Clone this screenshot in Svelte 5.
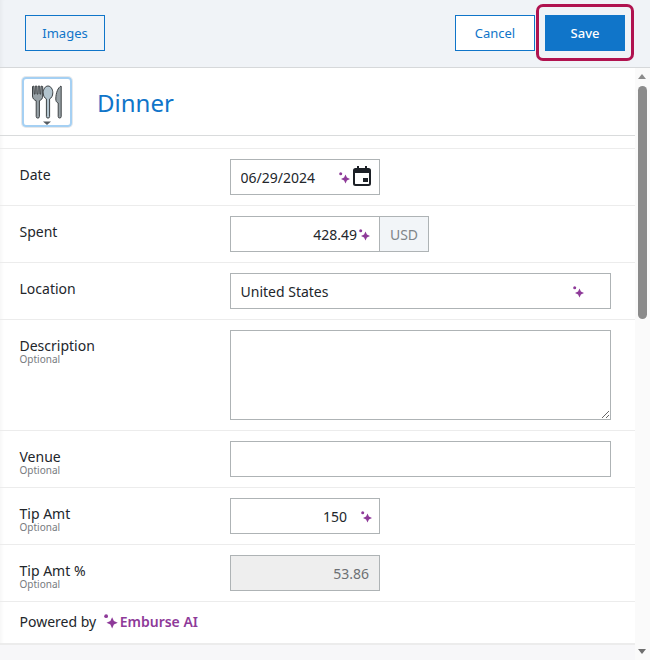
<script>
  const star = 'M6.500 2.500 L7.900 5.600 L11 7 L7.900 8.400 L6.500 11.500 L5.100 8.400 L2 7 L5.100 5.600 Z';
</script>

{#snippet spark(cls)}
  <svg class={cls} viewBox="0 0 12 12" aria-hidden="true">
    <circle cx="1.700" cy="1.700" r="1.500" fill="#8e3a99" />
    <path d={star} fill="#8e3a99" />
  </svg>
{/snippet}

<div class="page">
  <header class="toolbar">
    <button class="btn outline images">Images</button>
    <div class="actions">
      <button class="btn outline cancel">Cancel</button>
      <div class="highlight"><button class="btn primary">Save</button></div>
    </div>
  </header>

  <div class="body">
    <main class="content">
      <div class="title-row">
        <div class="icon-box">
          <svg viewBox="0 0 46 46" width="46" height="46" aria-hidden="true">
            <g stroke="#3d4245" stroke-width="1" stroke-linejoin="round">
              <path d="M8.500 7.500V17c0 2.600 1.700 4 3.700 4.700V37.500a1.600 1.600 0 0 0 3.200 0V21.700c2-.7 3.300-2.100 3.300-4.700V7.500l-1.600-.4-.4 8h-.7l-.3-8h-1.500l-.3 8h-.8l-.3-8h-1.500l-.3 8h-.7l-.4-8Z" fill="#98a2a7"/>
              <path d="M24 7c-2.800 0-4.800 3.200-4.800 6.800 0 3.200 1.500 5.400 3.200 6.100V37.500a1.600 1.600 0 0 0 3.200 0V19.900c1.700-.7 3.200-2.900 3.200-6.100C28.800 10.200 26.800 7 24 7Z" fill="#b3c5cf"/>
              <path d="M37 7c-2.800 1.400-5.200 6.500-5.200 13 0 2.400.9 3.400 2.400 4v13.500a1.500 1.500 0 0 0 3 0V7.300Z" fill="#98a2a7"/>
            </g>
            <path d="M19 42.600h8l-4 3.400Z" fill="#555b60" />
          </svg>
        </div>
        <h1>Dinner</h1>
      </div>
      <div class="spacer"></div>

      <div class="row">
        <label for="date">Date</label>
        <div class="field date-field">
          <input id="date" value="06/29/2024" />
          {@render spark('s-date')}
          <svg class="cal" viewBox="0 0 18 20" width="18" height="20" aria-hidden="true">
            <path fill-rule="evenodd" fill="#1c2026" d="M4 0h2v2h6V0h2v2h1.500A2.500 2.500 0 0 1 18 4.500v13a2.500 2.500 0 0 1-2.500 2.500h-13A2.500 2.500 0 0 1 0 17.500v-13A2.500 2.500 0 0 1 2.500 2H4ZM2 7v10.500c0 .3.200.5.500.5h13c.3 0 .5-.2.500-.5V7ZM10 12h5v4h-5Z"/>
          </svg>
        </div>
      </div>

      <div class="row">
        <label for="spent">Spent</label>
        <div class="spent-wrap">
          <div class="field spent-field">
            <input id="spent" class="right" value="428.49" />
            {@render spark('s-spent')}
          </div>
          <span class="unit">USD</span>
        </div>
      </div>

      <div class="row">
        <label for="loc">Location</label>
        <div class="field wide">
          <input id="loc" value="United States" />
          {@render spark('s-loc')}
        </div>
      </div>

      <div class="row tall">
        <label for="desc">Description<small>Optional</small></label>
        <textarea id="desc"></textarea>
      </div>

      <div class="row">
        <label for="venue">Venue<small>Optional</small></label>
        <div class="field wide"><input id="venue" /></div>
      </div>

      <div class="row">
        <label for="tip">Tip Amt<small>Optional</small></label>
        <div class="field tip-field">
          <input id="tip" class="right" value="150" />
          {@render spark('s-tip')}
        </div>
      </div>

      <div class="row">
        <label for="pct">Tip Amt %<small>Optional</small></label>
        <div class="field tip-field disabled">
          <input id="pct" class="right" value="53.86" disabled />
        </div>
      </div>

      <div class="powered">
        <span>Powered by</span>
        <span class="brand">{@render spark('s-brand')}Emburse AI</span>
      </div>
      <div class="foot"></div>
    </main>

    <div class="scrollbar">
      <span class="arrow up"></span>
      <span class="thumb"></span>
      <span class="arrow down"></span>
    </div>
  </div>
</div>

<style>
  :global(body) {
    margin: 0;
    background: #fff;
  }
  .page {
    width: 650px;
    height: 660px;
    overflow: hidden;
    font-family: "Noto Sans", sans-serif;
    font-size: 14px;
    color: #22262b;
    display: flex;
    flex-direction: column;
  }
  .toolbar {
    height: 67px;
    flex: none;
    background: #f0f3f7;
    border-bottom: 1px solid #d6d8da;
    display: flex;
    justify-content: space-between;
    padding: 0 25px;
    align-items: flex-start;
    box-shadow: inset 4px 0 4px -3px rgba(0, 0, 0, 0.05);
  }
  .btn {
    font: 400 13px/1 "Noto Sans", sans-serif;
    height: 36px;
    width: 80px;
    box-sizing: border-box;
    border-radius: 0;
    cursor: pointer;
    padding: 0;
  }
  .outline {
    border: 1px solid #1075c9;
    color: #1075c9;
    background: transparent;
  }
  .images {
    margin-top: 15px;
  }
  .cancel {
    background: #fff;
    margin-top: 15px;
  }
  .primary {
    display: block;
    border: none;
    background: #1075c9;
    color: #fff;
    font-weight: 500;
  }
  .actions {
    display: flex;
    align-items: flex-start;
  }
  .highlight {
    margin: 4px -9px 0 1px;
    width: 98px;
    height: 57px;
    box-sizing: border-box;
    border: 3px solid #b0124f;
    border-radius: 7px;
    padding: 8px 6px;
  }
  .body {
    flex: 1;
    display: flex;
    min-height: 0;
  }
  .content {
    width: 635px;
    flex: none;
    display: flex;
    flex-direction: column;
    box-shadow: inset 4px 0 4px -3px rgba(0, 0, 0, 0.05);
  }
  .title-row {
    height: 67px;
    border-bottom: 1px solid #d9dbdc;
    display: flex;
    align-items: flex-start;
    flex: none;
  }
  .icon-box {
    width: 50px;
    height: 50px;
    box-sizing: border-box;
    margin: 9px 0 0 22px;
    border: 2px solid #a5d0f3;
    border-radius: 4px;
    box-shadow: 0 0 0 1px #e6e8ea;
    overflow: hidden;
  }
  .icon-box svg {
    display: block;
  }
  h1 {
    margin: 19px 0 0 25px;
    font: 400 24px/32px "Noto Sans", sans-serif;
    color: #1075c9;
  }
  .spacer {
    height: 12px;
    border-bottom: 1px solid #ececec;
    flex: none;
  }
  .row {
    height: 57px;
    flex: none;
    border-bottom: 1px solid #ececec;
    display: flex;
    align-items: flex-start;
    padding: 10px 0 0 19.500px;
    box-sizing: border-box;
  }
  .row.tall {
    height: 111px;
  }
  label {
    width: 210.500px;
    flex: none;
    font-size: 14px;
    line-height: 16px;
    padding-top: 8px;
    display: block;
  }
  small {
    display: block;
    font-size: 10px;
    line-height: 10px;
    color: #777b80;
  }
  .field {
    position: relative;
    height: 36px;
    box-sizing: border-box;
    border: 1px solid #aeb3b5;
    background: #fff;
    display: flex;
  }
  .field input {
    border: none;
    background: transparent;
    width: 100%;
    min-width: 0;
    height: 100%;
    box-sizing: border-box;
    padding: 0 9.500px;
    font: 400 14px "Noto Sans", sans-serif;
    color: #22262b;
    outline: none;
  }
  .right {
    text-align: right;
  }
  .date-field {
    width: 150px;
  }
  .wide {
    width: 381px;
  }
  .tip-field {
    width: 150px;
  }
  .field.tip-field input {
    padding-right: 32px;
  }
  .disabled {
    background: #eeeeee;
  }
  .field.tip-field.disabled input {
    padding-right: 10px;
    color: #6d7073;
  }
  .spent-wrap {
    display: flex;
  }
  .spent-field {
    width: 149px;
    border-right: none;
  }
  .field.spent-field input {
    padding-right: 22px;
  }
  .unit {
    width: 50px;
    height: 36px;
    box-sizing: border-box;
    border: 1px solid #aeb3b5;
    background: #f2f5f8;
    color: #7f8589;
    font-size: 14px;
    display: flex;
    align-items: center;
    justify-content: center;
  }
  textarea {
    width: 381px;
    height: 90px;
    box-sizing: border-box;
    border: 1px solid #aeb3b5;
    border-radius: 0;
    outline: none;
    display: block;
    margin: 0;
    background: #fff;
  }
  .field svg {
    position: absolute;
  }
  :global(.s-date),
  :global(.s-spent),
  :global(.s-loc),
  :global(.s-tip) {
    position: absolute;
    width: 12px;
    height: 12px;
    top: 12px;
  }
  :global(.s-date) {
    left: 108px;
  }
  :global(.s-spent) {
    left: 128px;
  }
  :global(.s-loc) {
    left: 342px;
  }
  :global(.s-tip) {
    left: 130px;
  }
  .cal {
    left: 122px;
    top: 6px;
  }
  .powered {
    flex: none;
    display: flex;
    align-items: center;
    padding: 0 0 2px 19.500px;
    box-sizing: border-box;
    height: 43px;
    gap: 7.500px;
    line-height: 19px;
    border-bottom: 2px solid #ececec;
  }
  .brand {
    display: inline-flex;
    align-items: center;
    gap: 1px;
    color: #8e3a99;
    font-weight: 600;
  }
  :global(.s-brand) {
    width: 15px;
    height: 15px;
  }
  .foot {
    flex: 1;
    background: #f7f7f9;
  }
  .scrollbar {
    width: 15px;
    flex: none;
    background: #fafafa;
    position: relative;
  }
  .thumb {
    position: absolute;
    left: 3px;
    top: 18px;
    width: 9px;
    height: 233px;
    background: #8b8b8b;
    border-radius: 5px;
  }
  .arrow {
    position: absolute;
    left: 3px;
    width: 0;
    height: 0;
    border-left: 4.500px solid transparent;
    border-right: 4.500px solid transparent;
  }
  .up {
    top: 6px;
    border-bottom: 5px solid #8b8b8b;
  }
  .down {
    top: 581px;
    border-top: 5px solid #6f6f6f;
  }
</style>
